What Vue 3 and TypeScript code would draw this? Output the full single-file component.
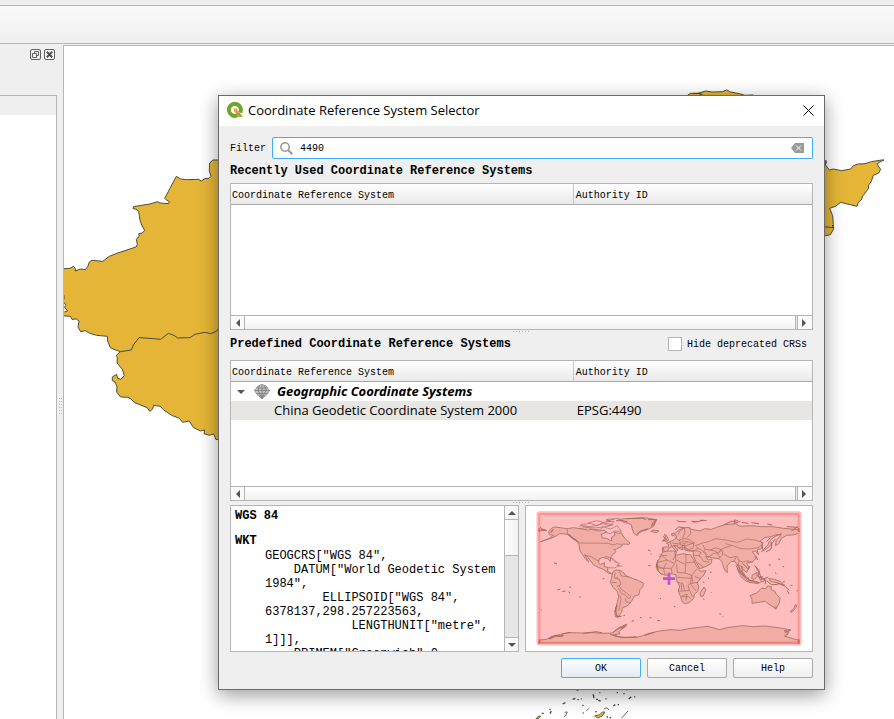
<script setup lang="ts">
import { ref } from 'vue'

interface CrsEntry {
  name: string
  authority: string
}

const filter = ref('4490')
const hideDeprecated = ref(false)
const predefined = ref<CrsEntry[]>([
  { name: 'China Geodetic Coordinate System 2000', authority: 'EPSG:4490' },
])

const wkt = [
  'GEOGCRS["WGS 84",',
  '    DATUM["World Geodetic System',
  '1984",',
  '        ELLIPSOID["WGS 84",',
  '6378137,298.257223563,',
  '            LENGTHUNIT["metre",',
  '1]]],',
  '    PRIMEM["Greenwich",0,',
].join('\n')
</script>

<template>
  <div class="app">
    <div class="menu-strip"></div>
    <div class="toolbar"></div>
    <div class="workspace">
      <aside class="dock">
        <div class="dock-title">
          <button type="button" class="dock-button" aria-label="Float panel">
            <svg viewBox="0 0 11 11" width="11" height="11">
              <rect x=".5" y=".5" width="10" height="10" rx="1.5" fill="#f4f4f4" stroke="#606060" />
              <path d="M4.5 4.500V2.500h4v4h-2M2.500 4.500h4v4h-4z" fill="none" stroke="#606060" />
            </svg>
          </button>
          <button type="button" class="dock-button" aria-label="Close panel">
            <svg viewBox="0 0 11 11" width="11" height="11">
              <rect x=".5" y=".5" width="10" height="10" rx="1.5" fill="#f4f4f4" stroke="#606060" />
              <path d="M2.800 2.800l5.400 5.400M8.200 2.800L2.800 8.200" stroke="#505050" stroke-width="2" />
            </svg>
          </button>
        </div>
        <div class="dock-list"><div class="dock-header"></div></div>
      </aside>
      <div class="dock-grip"></div>
      <main class="canvas">
        <svg class="canvas-map" viewBox="64 46 830 673" width="830" height="673">
          <g fill="#e4b536" stroke="#4c4a42" stroke-width="3" stroke-linejoin="round">
            <g transform="translate(60 150) scale(.33333)">
              <path d="M0 357L30 355L40 349L46 355L45 363L62 357L76 359L83 350L88 336L96 331L128 334L148 319L170 310L228 291L232 283L229 268L238 258L236 251L247 249L254 241L245 225L240 211L236 184L230 178L219 176L220 170L270 162L292 155L300 159L326 161L328 155L318 149L314 145L331 113L349 79L362 87L380 89L416 88L424 93L435 86L447 85L453 79L448 62L449 39L459 30L500 30L500 880L474 868L468 869L461 852L448 856L432 851L434 840L421 843L400 832L388 813L368 817L358 805L335 796L310 779L301 769L281 766L277 778L269 784L262 773L224 758L213 747L204 742L182 741L170 726L171 710L165 696L157 692V681L170 673L173 685L183 688L193 677L187 658L171 639L172 624L169 616L181 605L167 600L151 593L143 573L142 559L110 556L89 550L76 542L62 545L54 531L57 513L49 507L36 508L31 499L0 497Z" />
              <path d="M181 605L214 600L220 585L237 563L280 566L302 568L325 550L342 556L353 564L390 563L405 553L434 547L452 551L469 544L480 530" fill="none" />
              <path d="M12 436v12M12 457l6 10l-5 4l10 12l-10 3" fill="#fff" />
            </g>
            <g transform="translate(520 80) scale(.33333)">
              <path d="M500 48L511 40L534 40L557 33L576 36L607 35L620 30L632 36L658 41L675 46L700 45L700 70L500 70Z" />
              <path d="M520 40l22 0l8 8M536 40l18 14" fill="none" />
              <path d="M895 220l20 20L919 247L916 254L928 270L940 267L964 272L992 267L1000 257L1015 252L1035 251L1054 245L1085 240L1092 240L1074 249L1072 254L1082 268L1076 279L1060 286L1054 304L1045 317L1046 325L1028 348L1024 360L1015 367L1011 379L962 367L946 379L929 385L938 407L940 434L941 447L931 464L917 467L905 469Z" />
              <path d="M910 440l30 3l-3-8M916 254l3-12" fill="none" />
            </g>
            <g transform="translate(500 680) scale(.33333)" stroke-width="2.500">
              <path d="M284 108l15-4l8-8h8l-8 12l-14 6zM108 116l8-8h6l-8 9z" />
              <path d="M312 88l4-4h6l5 6M364 115l20-22M260 92l7-7M194 97l8-1l-5 8M192 110l8-5" fill="none" />
              <path d="M218 58l8-3M232 59h4M243 56l2 2M278 43l3 4v8M288 58h6M295 61l7 2M317 55l2 3M298 38h3M350 38h4M370 41h4M386 57l8-7M403 49l2 3M340 78l6-4M353 74h4M286 96l4-2M188 72l8-4M148 88h4M154 93l-4 8M125 100h6M247 76h4M248 99h3M320 111h4M330 111l2 4M230 30h5M378 29h4" fill="none" stroke-width="4" />
            </g>
          </g>
        </svg>
      </main>
    </div>

    <section class="dialog" role="dialog" aria-labelledby="dialog-title">
      <header class="title-bar">
        <svg class="logo" viewBox="0 0 16 16" width="16" height="16">
          <path d="M13.200 10.600A6 6 0 1 0 10.400 13.300" fill="none" stroke="#6fa52d" stroke-width="4" />
          <path d="M8.500 8.500l3.200 1l4.300 5.500h-4l-3.500-4z" fill="#89b03a" />
          <path d="M6.600 6.200l4.200.6l-.8.900l2.600 2.600l-1.800 1.800l-2.600-2.600l-1 .9z" fill="#ee9b45" />
        </svg>
        <h1 id="dialog-title" class="title">Coordinate Reference System Selector</h1>
        <button type="button" class="close" aria-label="Close">
          <svg viewBox="0 0 11 11" width="11" height="11">
            <path d="M.5.500l10 10M10.500.500l-10 10" stroke="#000" fill="none" />
          </svg>
        </button>
      </header>

      <div class="dialog-body">
        <div class="filter-row">
          <label for="crs-filter">Filter</label>
          <div class="filter-box">
            <svg viewBox="0 0 13 13" width="13" height="13">
              <circle cx="5" cy="5" r="4.200" fill="none" stroke="#999" stroke-width="1.500" />
              <path d="M8 8l4.300 4.300" stroke="#999" stroke-width="2" />
            </svg>
            <input id="crs-filter" v-model="filter" type="text" />
            <button type="button" class="clear" aria-label="Clear filter" @click="filter = ''">
              <svg viewBox="0 0 13 10" width="13" height="10">
                <path d="M0 5L4 0h9v10H4z" fill="#999" />
                <path d="M5 2.500l5 5M10 2.500l-5 5" stroke="#fff" />
              </svg>
            </button>
          </div>
        </div>

        <h2 class="section-title">Recently Used Coordinate Reference Systems</h2>
        <div class="tree recent">
          <table>
            <thead>
              <tr><th scope="col">Coordinate Reference System</th><th scope="col">Authority ID</th></tr>
            </thead>
          </table>
          <div class="hscroll">
            <button type="button" aria-label="Scroll left"><i class="arrow left"></i></button>
            <span class="hthumb"></span>
            <button type="button" aria-label="Scroll right"><i class="arrow right"></i></button>
          </div>
        </div>

        <div class="splitter"></div>
        <div class="section-row">
          <h2 class="section-title">Predefined Coordinate Reference Systems</h2>
          <label class="check"><input v-model="hideDeprecated" type="checkbox" />Hide deprecated CRSs</label>
        </div>
        <div class="tree predefined">
          <table>
            <thead>
              <tr><th scope="col">Coordinate Reference System</th><th scope="col">Authority ID</th></tr>
            </thead>
            <tbody>
              <tr class="group">
                <td colspan="2">
                  <div class="group-cell">
                    <i class="arrow down"></i>
                    <svg viewBox="0 0 16 15" width="16" height="15">
                      <path d="M8 .5L12 2L15.500 6.500L13 10.500L8 14.500L3 10.500L.5 6.500L4 2Z" fill="#c4c4c4" stroke="#999" />
                      <path d="M2.500 4h11M.5 6.500h15M2.500 9.500h11M5 12h6M8 .5v14M5.500 1.500L4 6.500L8 14.500L12 6.500L10.500 1.500" fill="none" stroke="#707070" stroke-width=".7" />
                    </svg>
                    <span>Geographic Coordinate Systems</span>
                  </div>
                </td>
              </tr>
              <tr v-for="crs in predefined" :key="crs.authority" class="selected">
                <td class="crs-name">{{ crs.name }}</td>
                <td>{{ crs.authority }}</td>
              </tr>
            </tbody>
          </table>
          <div class="hscroll">
            <button type="button" aria-label="Scroll left"><i class="arrow left"></i></button>
            <span class="hthumb"></span>
            <button type="button" aria-label="Scroll right"><i class="arrow right"></i></button>
          </div>
        </div>

        <div class="splitter"></div>
        <div class="details">
          <div class="wkt-box">
            <div class="wkt-text">
              <h3>WGS 84</h3>
              <h3>WKT</h3>
              <pre>{{ wkt }}</pre>
            </div>
            <div class="vscroll">
              <button type="button" aria-label="Scroll up"><i class="arrow up"></i></button>
              <span class="vthumb"></span>
              <span class="vtrack"></span>
              <button type="button" aria-label="Scroll down"><i class="arrow down"></i></button>
            </div>
          </div>
          <div class="extent-box">
            <svg viewBox="18 78 858 435" role="img" aria-label="Extent of the selected system">
              <rect x="54" y="98" width="786" height="394" fill="#ffbdbd" stroke="#ffbcbc" stroke-width="9" rx="4" />
              <g fill="#f0aca5" stroke="#b57a70" stroke-width="3" stroke-linejoin="round">
                <path d="M86 153L96 144L104 141L142 146L160 143L185 147L206 150L218 147L235 153L252 150L260 156L243 164L247 174L260 175L272 182L276 181L274 172L285 165L282 156L296 160L304 158L309 168L316 177L330 189L327 193L308 192L305 199L289 207L282 209L288 215L279 223L272 232L271 245L265 237L248 232L237 237L236 248L241 254L254 248L252 259L264 263L262 273L274 281L284 277L280 282L266 280L250 268L235 262L220 254L212 243L200 228L194 224L202 238L207 246L198 239L188 224L180 213L177 192L169 180L157 173L149 164L134 162L119 161L105 170L84 178L59 186L88 175L100 166L88 164Z" />
                <path d="M288 122L310 116L350 115L375 113L410 119L401 139L380 150L366 154L356 160L352 167L342 161L337 147L334 135L326 130L314 128L303 122Z" />
                <path d="M279 275L288 270L300 271L313 280L316 286L329 292L340 296L356 302L370 309L369 319L360 329L357 344L342 349L336 361L327 373L319 379L307 383L306 394L300 403L295 412L286 410L285 395L292 367L296 350L292 334L279 322L271 307L275 294L276 287Z" />
                <path d="M427 218L439 213L464 213L469 216L467 226L488 221L512 225L521 239L527 254L536 268L541 274L558 272L551 285L540 297L531 309L536 319L533 335L523 342L521 355L507 368L493 371L487 366L482 350L475 334L479 318L470 301L468 285L456 281L439 286L422 281L411 269L409 252L418 236Z" />
                <path d="M427 202L445 201L446 193L438 190L451 185L464 178L470 171L466 164L456 168L455 161L466 159L476 150L493 143L507 142L515 148L540 153L554 146L574 148L590 142L615 134L647 131L660 139L693 137L725 140L757 140L790 145L836 149L836 160L818 165L800 166L784 175L776 192L766 197L769 181L783 165L768 164L750 171L735 172L721 183L728 192L725 205L711 210L716 225L707 213L697 215L704 224L708 236L696 246L680 249L687 264L680 277L669 269L664 259L668 275L679 292L664 282L656 262L645 244L634 244L621 258L622 278L614 271L605 244L597 236L578 234L564 230L557 229L564 240L576 237L573 251L554 261L539 266L528 245L519 225L520 214L500 212L493 208L495 197L486 197L490 209L480 207L469 198L461 196L474 211L468 214L456 200L447 204L443 213L427 215Z" />
                <path d="M690 347L710 339L725 324L738 326L742 318L754 320L753 329L765 334L767 340L780 355L778 369L768 386L755 378L744 371L736 364L716 367L696 370L696 357ZM762 382l5 6l3-7zM826 373l5 5l-7 10l-8 9l-6-2l12-10zM552 321l5 8l-7 19l-8 1l-2-10zM392 154l10-4l15 3l-8 5zM430 180l7-7l-4-10l7 4l6 14l-9 4zM725 215l10-6l8-5l10-9l2-8l-8-2l-2 8zM652 268l15 14l18 23l-6-1l-16-14zM684 300l16 4l15 3v4l-28-4zM697 285l15-8l-1 13l-9 9l-7-4zM716 292l12-3l-6 12zM746 296l18 2l18 7l12 11l-22-8l-20-3z" />
                <path d="M59 480L80 478L96 469L126 462L147 458L190 459L220 458L250 460L278 459L293 445L320 432L318 439L304 448L296 455L300 461L280 464L300 471L347 473L368 467L391 459L419 453L453 449L482 451L513 445L564 439L598 449L621 443L667 437L700 440L735 438L781 444L813 450L794 456L805 461L793 468L825 478L836 480L836 488L59 488Z" />
              </g>
              <g fill="none" stroke="#a96a60" stroke-width="2" stroke-linejoin="round">
                <path d="M142 146v17M177 189l88 1l14 5l12-4l14 3M194 225l20 5l15 10l9 4M180 145l25-2l15 7l20-2l10-7l22 6l20-10l12 17l-22-1l-12 9l-14-6M177 142l8-9l26-3l16 6l23-5l20 7l12-13l-24-2l26-6M180 135l28 5l25-4l16-8l30 7M204 129l26-7l20 5l23-3l-14-6l40-3M185 139l40 5l35-5l20-5M256 229l18 6l9 10l15 5l-7 7l15 2M274 232l18 16M262 263l22 1l16-9M285 277l-2 17l15 4l5 15l-12 7M298 272l6 16l24 3M275 307l15 1M296 316l8 12l16 12l13 9l-7 8l-10-12l-12-5l-9-15M299 345l4 12l-7 36M316 355l2 10l14 4" />
                <path d="M419 222l22 18l22 10M441 240l-30 8M464 213l4 27l-4 12l-10 13h-25l-18-8M469 240l28 14l1-32M498 248l28-2M497 254l-2 25l-23-2l-2-24M440 248l-10 18l6 20M430 265l-18-2M454 265l2 16M495 279l20 7l15-18M515 286l-4 25l22-4M472 292l40 3M470 306l19 5l5 22h-19M494 333l14-2l10 20M482 350l20-8l-5 20M508 331l-4-15l7-5l17 22M484 312l1 20M525 289l17 8M515 286l4 23M467 225l-8 15M486 350h20l8 7M427 227l15-1M450 185l5 14l20-3M457 189l22 3l8-9l18 2l17 8M479 180l2 15l20 1l22-8l-5 18l-23 4M464 169l10 12l20-6l15 4l12 9M475 164l3-11l15-9M487 175l8-17l-2-15M501 172l12-11l-4-17M491 197l17 15l26 1l10 5M520 213l15-8l14 8l13 10M535 205l-9-8l22-8l18-4l20-9l30 4l36 7l28-10l30 4l20 8l-13 13l-28 5l-25-1l-23-8l-25-7M548 195l8 13l24 4l13 6l16-13l26-8M556 208l-6 8l15 17M570 210l18-7l18 7l-13 11l8 13M593 218l-14 3l-16 12M521 225l18 3l12 16l16 3M533 248l18 14M542 216l-4 14M609 211l-3 15l-9 9M608 221l22 12l19-4l-7 15M650 229l7 12l12 6l10-5l18 5M657 241l-2 13l15 8M470 205l15-4l15 4M486 192l16-4" />
                <path d="M411 252l4 22l10 9M414 240l-6 22M653 253l8 16l13 20l17 13M648 256l10 20l16 16M667 250l18 17l5-9M683 291l4 9l17 4M704 256l8 13l7 10l3 15l-8-5l4-16l-12-15M690 302l28 6l20-8l-3 13M724 293l13 7M722 300l23-9M741 303l14 11l20-1M772 309l24 10M796 320l12 11M802 332l5 10M725 195l4 14M738 216l15-9l3-17l11-14M708 228l5 12M740 185l11-12M750 181l15-12l20-8M426 184l10-5M428 168l12 10l-10 5M428 202l4 10M466 149l10-8l16 2" stroke-width="3" />
                <path d="M470 122l10 3h18M520 127l18-3l12-4M540 121l20 1M515 124l20 1M610 135l22-10l22-3M645 118l-2 12l18-6M665 127l20 3M695 128l22 3M742 132l15 3M58 151h22l-14-4M60 140l9 14M814 153l21-14M800 140l34 2M102 248l9 4M385 257h7M384 210l7 3M392 221l3 2M248 296h5M62 390h3M598 402h6M608 410h2M310 406h5M360 412l5 2M389 413h5M112 330l9-3M127 335l10-2M148 320l5 3M178 351h5M145 335l5 4M570 277h5M564 294l3 2M548 306l5 1M574 337l2 2M788 260h4M765 278l4 3M812 316h5M830 333l6-2M789 307l5-3M412 422h8M335 425l7-4M290 292l5 4M774 236l7 3M746 255h7M550 356l3 4M420 355l3 1M462 379l4 2M418 229h4" stroke-width="3" />
                <path d="M322 116l45-2l10 5M350 163l10-9l23-8M397 139l12-20l-10 8l-5 12M384 119h24M298 120l24 5" stroke-width="3" />
                <path d="M145 164l15 12l15 10M100 148l-8 10M287 382l1 17l3 12M289 409h15M291 375l-6 21" stroke-width="4" />
                <path d="M86 476l21-10l18 4l3-9l25-4M89 477l17-8l25-2M190 460l40-5l17 4M278 458l17-12l20-7M270 463l18 6l26 4l36-3M375 466l28-9M304 449l13-15M792 452l15 1l-7 13" stroke-width="3" />
              </g>
              <path d="M58 478V102H836V489" fill="none" stroke="#ff9292" stroke-width="6" stroke-linejoin="round" />
              <path d="M57 488H837" stroke="#ed7e7c" stroke-width="6" />
              <path d="M58 478v14M836 478v14M58 145v10M836 145v10" stroke="#d76262" stroke-width="6" />
              <path d="M429 296h36M447 278v36" stroke="#ba57d0" stroke-width="8" />
            </svg>
          </div>
        </div>

        <div class="buttons">
          <button type="button" class="default">OK</button>
          <button type="button">Cancel</button>
          <button type="button">Help</button>
        </div>
      </div>
    </section>
  </div>
</template>

<style>
body {
  margin: 0;
  background: #efefef;
}
</style>

<style scoped>
* {
  box-sizing: border-box;
}
.app {
  position: relative;
  display: flex;
  flex-direction: column;
  height: 100vh;
  overflow: hidden;
  background: #efefef;
  color: #000;
  font-family: "Liberation Mono", monospace;
  font-size: 10px;
}
button {
  padding: 0;
  font: inherit;
  color: inherit;
}
h1,
h2,
h3,
pre {
  margin: 0;
}
svg {
  display: block;
  flex: none;
}
.menu-strip {
  height: 6px;
  flex: none;
  border-bottom: 1px solid #b5b5b5;
}
.toolbar {
  height: 38px;
  flex: none;
  border-bottom: 1px solid #b5b5b5;
  background: linear-gradient(#fafafa, #efefef);
}
.workspace {
  flex: 1;
  min-height: 0;
  display: flex;
  padding-top: 1px;
}
.dock {
  width: 57px;
  display: flex;
  flex-direction: column;
}
.dock-title {
  height: 50px;
  display: flex;
  justify-content: flex-end;
  align-items: flex-start;
  gap: 3px;
  padding: 4px 2px;
}
.dock-button {
  border: 0;
  background: none;
}
.dock-list {
  flex: 1;
  background: #fff;
  border-top: 1px solid #b5b5b5;
  border-right: 1px solid #b5b5b5;
}
.dock-header {
  height: 19px;
  background: #efefef;
}
.dock-grip {
  width: 6px;
  display: flex;
  align-items: center;
  justify-content: center;
  padding-top: 49px;
}
.dock-grip::before {
  content: "";
  width: 3px;
  height: 17px;
  background: repeating-linear-gradient(#bbb 0 1px, transparent 1px 3px);
  mask: repeating-linear-gradient(90deg, #000 0 1px, transparent 1px 2px);
}
.canvas {
  flex: 1;
  min-width: 0;
  overflow: hidden;
  background: #fff;
  border-top: 1px solid #b5b5b5;
  border-left: 1px solid #b5b5b5;
}

.dialog {
  position: absolute;
  left: 218px;
  top: 95px;
  width: 607px;
  border: 1px solid #6a6a6a;
  background: #efefef;
  box-shadow: 0 5px 18px rgba(0, 0, 0, 0.4);
}
.title-bar {
  display: flex;
  align-items: center;
  height: 30px;
  padding: 0 10px 2px 8px;
  gap: 5px;
  background: #fff;
}
.title {
  flex: 1;
  font: 400 13px/20px "Open Sans", "Noto Sans", sans-serif;
}
.close {
  border: 0;
  background: none;
}
.dialog-body {
  padding: 11px 11px;
}
.filter-row {
  display: flex;
  align-items: center;
  gap: 6px;
}
.filter-box {
  flex: 1;
  display: flex;
  align-items: center;
  gap: 7px;
  height: 22px;
  padding: 0 8px 0 7px;
  border: 1px solid #3daefd;
  border-radius: 2px;
  background: #fff;
}
.filter-box input {
  flex: 1;
  min-width: 0;
  padding: 0;
  border: 0;
  outline: 0;
  background: none;
  color: #000;
  font: inherit;
}
.clear {
  border: 0;
  background: none;
}
.section-title {
  font-size: 12px;
  line-height: 24px;
  white-space: nowrap;
}
.tree {
  display: flex;
  flex-direction: column;
  border: 1px solid #b5b5b5;
  background: #fff;
}
.recent {
  height: 147px;
}
.predefined {
  height: 141px;
}
table {
  width: 100%;
  border-collapse: separate;
  border-spacing: 0;
  table-layout: fixed;
}
th {
  height: 21px;
  padding: 2px 1px 0;
  text-align: left;
  font-weight: 400;
  background: linear-gradient(#fff, #e9e9e9);
  border-bottom: 1px solid #a9a9a9;
}
th:first-child {
  width: 59%;
  border-right: 1px solid #c8c8c8;
}
th:last-child {
  padding-left: 2px;
}
td {
  height: 19px;
  padding: 0 3px;
  font: 400 13px/19px "Open Sans", "Noto Sans", sans-serif;
  white-space: nowrap;
}
.group-cell {
  display: flex;
  align-items: center;
  gap: 7px;
  padding-left: 3px;
  font-family: "Noto Sans", sans-serif;
  font-weight: 700;
  font-style: italic;
}
.group-cell .arrow {
  margin-right: 2px;
}
.selected td {
  background: #e7e6e2;
}
.selected .crs-name {
  padding-left: 43px;
}
.hscroll {
  display: flex;
  height: 14px;
  margin-top: auto;
  border-top: 1px solid #b5b5b5;
  background: #e8e8e8;
}
.hscroll button,
.vscroll button {
  display: flex;
  align-items: center;
  justify-content: center;
  width: 13px;
  height: 13px;
  border: 0;
  background: #fafafa;
}
.hthumb {
  flex: 1;
  margin-right: 1px;
  border: solid #b5b5b5;
  border-width: 0 1px;
  background: linear-gradient(#fff, #f2f2f2);
}
.hscroll button:last-child {
  width: 15px;
  padding-right: 2px;
  border-left: 1px solid #b5b5b5;
}
.arrow {
  width: 0;
  height: 0;
  border: 4px solid transparent;
}
.arrow.left {
  border-right-color: #555;
  border-left: 0;
}
.arrow.right {
  border-left-color: #555;
  border-right: 0;
}
.arrow.up {
  border-bottom-color: #555;
  border-top: 0;
}
.arrow.down {
  border-top-color: #555;
  border-bottom: 0;
}
.splitter {
  display: flex;
  justify-content: center;
  height: 4px;
  padding-top: 1px;
}
.splitter::before {
  content: "";
  width: 17px;
  height: 1px;
  background: repeating-linear-gradient(90deg, #b5b5b5 0 1px, transparent 1px 3px);
}
.section-row {
  display: flex;
  align-items: center;
  justify-content: space-between;
  height: 26px;
  padding: 0 6px 6px 0;
}
.check {
  display: flex;
  align-items: center;
  gap: 5px;
}
.check input {
  appearance: none;
  width: 14px;
  height: 14px;
  margin: 0;
  border: 1px solid #b5b5b5;
  background: #fff;
}
.details {
  display: flex;
  gap: 6px;
  height: 147px;
}
.wkt-box {
  flex: 1;
  display: flex;
  min-width: 0;
  border: 1px solid #b5b5b5;
  background: #fff;
}
.wkt-text {
  flex: 1;
  min-width: 0;
  overflow: hidden;
  padding: 3px 4px 0;
  font-size: 12px;
  line-height: 14px;
}
.wkt-text h3 {
  font-size: 12px;
  line-height: 14px;
}
.wkt-text h3 + h3 {
  margin-top: 11px;
}
.wkt-text pre {
  font: inherit;
  padding: 1px 0 0 30px;
}
.vscroll {
  display: flex;
  flex-direction: column;
  width: 14px;
  border-left: 1px solid #b5b5b5;
  background: #e6e6e6;
}
.vthumb {
  height: 37px;
  border: solid #b5b5b5;
  border-width: 1px 0;
  background: linear-gradient(90deg, #fff, #f2f2f2);
}
.vtrack {
  flex: 1;
  border-bottom: 1px solid #b5b5b5;
}
.extent-box {
  width: 288px;
  border: 1px solid #b5b5b5;
  background: #fff;
}
.extent-box svg {
  width: 100%;
}
.buttons {
  display: flex;
  justify-content: flex-end;
  gap: 6px;
  padding-top: 6px;
}
.buttons button {
  width: 80px;
  height: 20px;
  border: 1px solid #a9a9a9;
  border-radius: 2px;
  background: linear-gradient(#fff, #efefef);
}
.buttons .default {
  border-color: #3daefd;
  background: linear-gradient(#fdfefe, #e3ebf3);
}
</style>
